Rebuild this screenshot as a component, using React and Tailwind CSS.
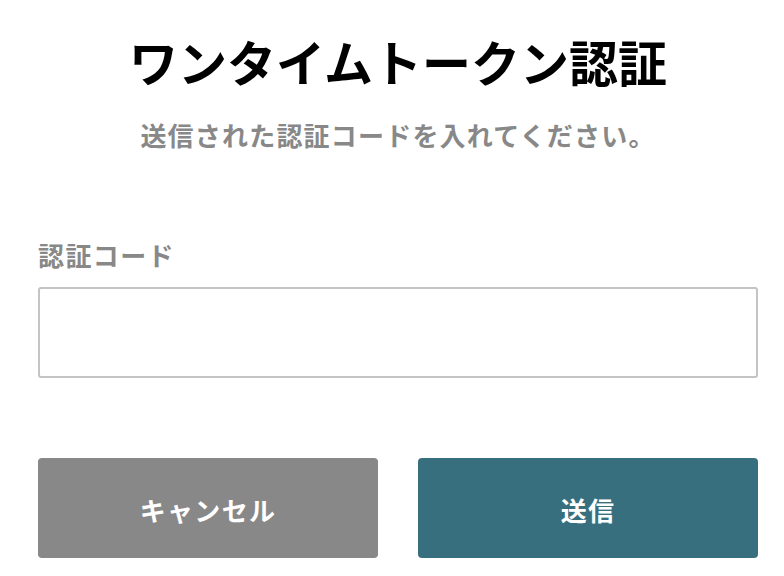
import React from 'react';

export default function App() {
  return (
    <div className="min-h-[576px] bg-white font-['Noto_Sans_CJK_JP',sans-serif]">
      <div className="ml-[38px] w-[720px]">
        {/* Heading */}
        <h1 className="pt-[31px] text-center text-[49px] leading-[60px] font-bold text-black">
          ワンタイムトークン認証
        </h1>
        <p className="mt-[28px] text-center text-[26px] leading-[32px] font-bold tracking-[1.2px] text-[#888888]">
          送信された認証コードを入れてください。
        </p>

        {/* Field */}
        <div className="mt-[88px]">
          <label className="block text-[26px] leading-[32px] font-bold tracking-[1.4px] text-[#888888]">
            認証コード
          </label>
          <input
            type="text"
            className="mt-[16px] block h-[91px] w-full rounded-[3px] border-2 border-[#c4c4c4] bg-white px-4 text-[24px] outline-none"
          />
        </div>

        {/* Actions */}
        <div className="mt-[80px] grid grid-cols-2 gap-[40px]">
          <button
            type="button"
            className="flex h-[100px] items-center justify-center rounded-[4px] bg-[#888888] pt-[2px] text-[26px] font-bold tracking-[0.05em] text-white"
          >
            キャンセル
          </button>
          <button
            type="button"
            className="flex h-[100px] items-center justify-center rounded-[4px] bg-[#386f7e] pt-[2px] text-[26px] font-bold tracking-[0.05em] text-white"
          >
            送信
          </button>
        </div>
      </div>
    </div>
  );
}
